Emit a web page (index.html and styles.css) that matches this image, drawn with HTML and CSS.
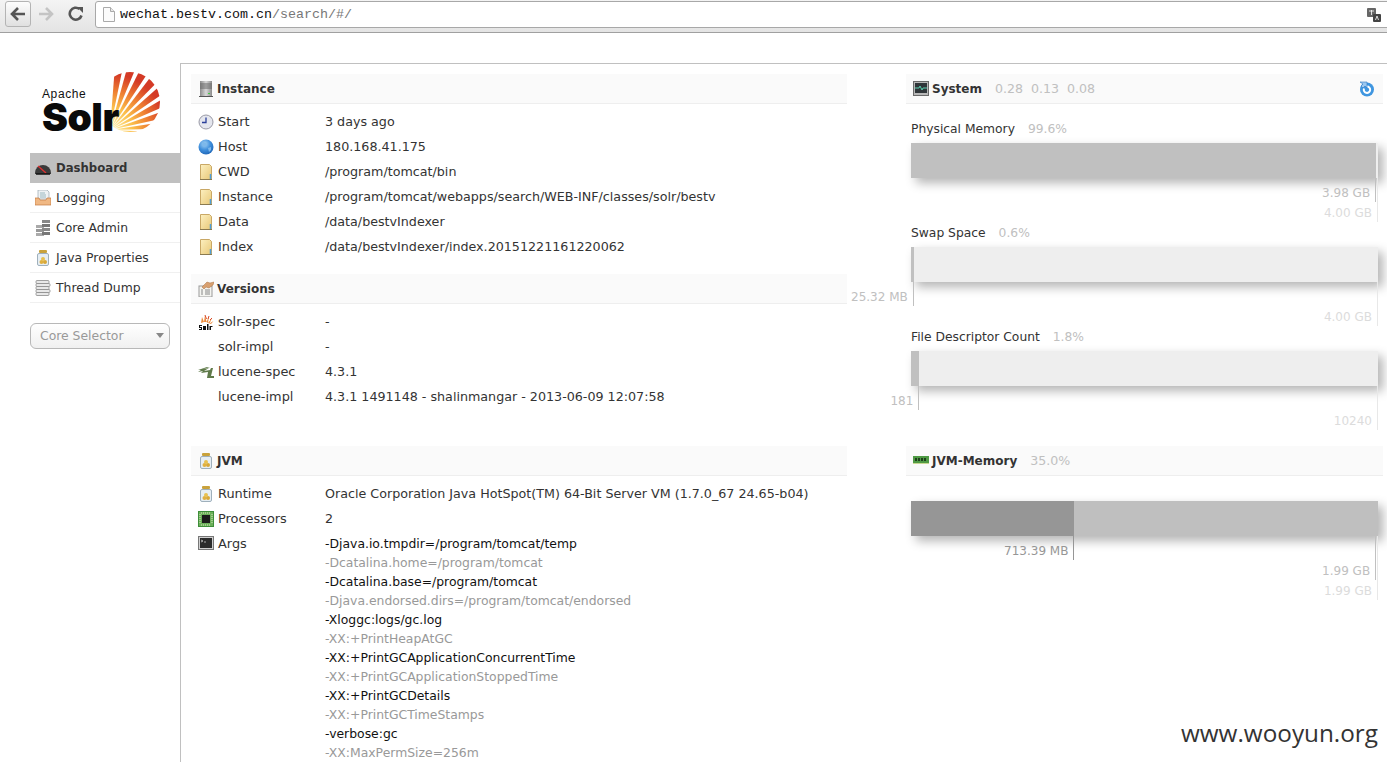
FILE: index.html
```html
<!DOCTYPE html>
<html lang="en">
<head>
<meta charset="utf-8">
<title>Solr Admin</title>
<link rel="stylesheet" href="styles.css">
</head>
<body>
<svg class="sprite" width="0" height="0" aria-hidden="true">
  <defs>
    <linearGradient id="g-folder" x1="0" y1="0" x2="1" y2="1"><stop offset="0" stop-color="#fdf0c0"/><stop offset="1" stop-color="#e8c878"/></linearGradient>
    <linearGradient id="g-grey" x1="0" y1="0" x2="1" y2="0"><stop offset="0" stop-color="#8c8c8c"/><stop offset=".5" stop-color="#d8d8d8"/><stop offset="1" stop-color="#8c8c8c"/></linearGradient>
    <radialGradient id="g-globe" cx=".4" cy=".3" r=".8"><stop offset="0" stop-color="#a6d4f5"/><stop offset=".5" stop-color="#3f8fdc"/><stop offset="1" stop-color="#1a5fb0"/></radialGradient>
    <radialGradient id="g-ray" gradientUnits="userSpaceOnUse" cx="0" cy="0" r="56"><stop offset=".1" stop-color="#ffeb9c"/><stop offset=".4" stop-color="#fbc04c"/><stop offset=".68" stop-color="#ef8232"/><stop offset="1" stop-color="#d43a26"/></radialGradient>
    <symbol id="i-server" viewBox="0 0 16 16"><rect x="2" y="0" width="12" height="15" fill="url(#g-grey)"/><path d="M2 3h12M2 5h12M2 7h12" stroke="#666" fill="none"/><path d="M1 15h14v1H1z" fill="#555"/><rect x="10" y="12" width="2" height="1" fill="#4c4"/></symbol>
    <symbol id="i-clock" viewBox="0 0 16 16"><circle cx="8" cy="8" r="7" fill="#e4e6ee" stroke="#9a9aa6"/><path d="M8 3.500V8.500H4" fill="none" stroke="#2a3f9a" stroke-width="1.300"/></symbol>
    <symbol id="i-globe" viewBox="0 0 16 16"><circle cx="8" cy="8" r="7.500" fill="url(#g-globe)"/><path d="M5 3l3 1 1 2-3 2-2-2zM10 9l3-1 0 3-2 2z" fill="#7db8ea"/></symbol>
    <symbol id="i-folder" viewBox="0 0 16 16"><path d="M2.500 .5h9l2 2v13h-11z" fill="url(#g-folder)" stroke="#c9a866"/><path d="M2 15.500h12" stroke="#8a7a50"/><path d="M12.500 10v5" stroke="#4f9fd8" stroke-width="1.500"/></symbol>
    <symbol id="i-versions" viewBox="0 0 16 16"><rect x="1" y="5" width="13" height="11" fill="#f4f4f0" stroke="#999"/><path d="M3 9h2M7 9h5M3 11h2M7 11h5M3 13h2M7 13h5" stroke="#888"/><path d="M4 6l5-5 3 1 4-1-1 3-4 3-3-1-2 2z" fill="#d8a070" stroke="#a87040" stroke-width=".5"/></symbol>
    <symbol id="i-solr" viewBox="0 0 16 16"><path d="M3 9L4 3 6 8zM6 8L7 1 8.500 8zM8.500 8L11 2 10 9zM10 9l4-5-2.500 5.500zM11.500 9.500l4-2.500-2.500 3z" fill="#ec8a3a"/><path d="M7 1l1.500 4M11 2l-1 3M14 4l-2 2" stroke="#d84a2a"/><path d="M1 11h3v1H2v1h2v3H1v-1h2v-1H1zM5 12h3v4H5zM9 10h1.500v6H9zM11.500 12h3v1h-1.500v3h-1.500z" fill="#111"/></symbol>
    <symbol id="i-lucene" viewBox="0 0 16 16"><path d="M0 6l9-3 3 0-7 2 6-1-5 3 6-1 1-2 2 0-2 8h4v2H9l1-6-7 1 2-2-5 1 3-2z" fill="#5f7a4a"/></symbol>
    <symbol id="i-jar" viewBox="0 0 16 16"><rect x="4" y="0" width="8" height="3" rx="1" fill="#c9a23c"/><rect x="2.500" y="3.500" width="11" height="12" rx="1.500" fill="#e6eef4" stroke="#9fb0bc"/><circle cx="6.500" cy="12" r="2" fill="#e0b040"/><circle cx="10" cy="12" r="2" fill="#d8a838"/><circle cx="8" cy="9" r="2" fill="#e8c050"/></symbol>
    <symbol id="i-chip" viewBox="0 0 16 16"><rect x="0" y="0" width="16" height="16" fill="#3e8e3a"/><rect x="1" y="1" width="14" height="14" fill="#6cb05a"/><rect x="4" y="4" width="8" height="8" fill="#1c1c1c"/><path d="M2 3v10M14 3v10M3 2h10M3 14h10" stroke="#d8e8c0" stroke-dasharray="1 1"/></symbol>
    <symbol id="i-term" viewBox="0 0 16 16"><rect x=".5" y="1.500" width="15" height="13" fill="#d0d0d0" stroke="#777"/><rect x="2" y="3" width="12" height="10" fill="#2c2c2c"/><path d="M3 5l2 1-2 1M6 7h2" stroke="#ccc" fill="none" stroke-width=".8"/></symbol>
    <symbol id="i-monitor" viewBox="0 0 16 16"><rect x=".5" y=".5" width="15" height="14" fill="#b8b8b8" stroke="#6a6a6a"/><rect x="2" y="2" width="12" height="10" fill="#30363a"/><path d="M2 7h4l1-2 2 4 1-2h4" stroke="#5ad0b0" fill="none"/></symbol>
    <symbol id="i-ram" viewBox="0 0 16 16"><rect x="0" y="3" width="16" height="8" fill="#4f9a44"/><path d="M2 5h2v3H2zM5 5h2v3H5zM8 5h2v3H8zM11 5h2v3h-2z" fill="#1f3f1c"/><path d="M0 10h16v1H0z" fill="#c8d890"/></symbol>
    <symbol id="i-reload" viewBox="0 0 16 16"><circle cx="8" cy="8.500" r="7" fill="#3f96e0"/><path d="M8 5.500a3.200 3.200 0 1 1-3 2" fill="none" stroke="#fff" stroke-width="2"/><path d="M1 1h7v6L6 5 4 7 2 5l2-2z" fill="#9cc8f0" stroke="#2f78c4" stroke-width=".6"/></symbol>
    <symbol id="i-dash" viewBox="0 0 16 16"><path d="M0 13a8 8 0 0 1 16 0v1H0z" fill="#3a3a3a"/><path d="M3 6l8 7" stroke="#e03030" stroke-width="1.300"/><path d="M1 14h14" stroke="#111" stroke-width="1.500"/></symbol>
    <symbol id="i-log" viewBox="0 0 16 16"><path d="M3 0h9l2 2v7H3z" fill="#eef2f4" stroke="#9aa8b0" stroke-width=".7"/><path d="M5 3h5M5 5h6M5 7h6" stroke="#9ab8c0"/><path d="M0 8h4l1 2h6l1-2h4v7H0z" fill="#f0b884" stroke="#c47a40" stroke-width=".7"/></symbol>
    <symbol id="i-core" viewBox="0 0 16 16"><rect x="1" y="5" width="8" height="3" fill="#aaa"/><rect x="1" y="9" width="8" height="3" fill="#999"/><rect x="1" y="13" width="8" height="3" fill="#aaa"/><rect x="7" y="0" width="8" height="3" fill="#888"/><rect x="7" y="4" width="8" height="3" fill="#777"/><rect x="7" y="8" width="8" height="3" fill="#888"/><rect x="7" y="12" width="8" height="3" fill="#777"/></symbol>
    <symbol id="i-thread" viewBox="0 0 16 16"><g fill="#e8e8e8" stroke="#8a8a8a" stroke-width=".8"><rect x="1" y=".5" width="13" height="3" rx="1"/><rect x="1" y="3.500" width="14" height="3" rx="1"/><rect x="1" y="6.500" width="13" height="3" rx="1"/><rect x="1" y="9.500" width="14" height="3" rx="1"/><rect x="1" y="12.500" width="13" height="3" rx="1"/></g></symbol>
    <polygon id="ray" points="0,0 80,-5 80,5" fill="url(#g-ray)"/>
    <clipPath id="sun-clip"><circle cx="35" cy="34" r="30"/></clipPath>
  </defs>
</svg>

<header class="chrome">
  <button class="nav-btn nav-back" aria-label="Back">
    <svg class="nav-icon" viewBox="0 0 16 16"><path d="M8 2L2 8l6 6M2 8h13" fill="none" stroke="#555" stroke-width="2.600"/></svg>
  </button>
  <span class="nav-plain">
    <svg class="nav-icon" viewBox="0 0 16 16"><path d="M8 2l6 6-6 6M14 8H1" fill="none" stroke="#c4c4c4" stroke-width="2.600"/></svg>
  </span>
  <span class="nav-plain">
    <svg class="nav-icon" viewBox="0 0 16 16"><path d="M13.500 9.500A6 6 0 1 1 11.500 3" fill="none" stroke="#555" stroke-width="2.600"/><path d="M9 1h6v6z" fill="#555"/></svg>
  </span>
  <div class="address">
    <svg class="page-icon" viewBox="0 0 12 15"><path d="M.5.500h7l4 4v10H.500z" fill="#fbfbfb" stroke="#aaa"/><path d="M7.500.500v4h4" fill="#e8e8e8" stroke="#aaa"/></svg>
    <span class="url">wechat.bestv.com.cn<span class="url-path">/search/#/</span></span>
    <svg class="translate" viewBox="0 0 14 14"><rect x="0" y="0" width="9" height="9" rx="1" fill="#666"/><rect x="6" y="6" width="8" height="8" rx="1" fill="#444"/><path d="M2 3h5M4.500 2v5M8.500 12l1.500-4 1.500 4" stroke="#fff" fill="none" stroke-width=".8"/></svg>
  </div>
</header>

<div class="page">
  <aside class="sidebar">
    <div class="logo">
      <svg class="logo-sun" viewBox="0 0 70 67">
        <g clip-path="url(#sun-clip)"><g transform="translate(15 62)">
          <use href="#ray" transform="rotate(6)"/><use href="#ray" transform="rotate(-5)"/><use href="#ray" transform="rotate(-16)"/><use href="#ray" transform="rotate(-27)"/><use href="#ray" transform="rotate(-38)"/><use href="#ray" transform="rotate(-49)"/><use href="#ray" transform="rotate(-60)"/><use href="#ray" transform="rotate(-71)"/><use href="#ray" transform="rotate(-82)"/>
        </g></g>
      </svg>
      <div class="logo-words">
        <span class="logo-apache">Apache</span>
        <span class="logo-solr">Solr</span>
      </div>
    </div>
    <nav class="menu">
      <a class="menu-item active"><svg class="ico"><use href="#i-dash"/></svg>Dashboard</a>
      <a class="menu-item"><svg class="ico"><use href="#i-log"/></svg>Logging</a>
      <a class="menu-item"><svg class="ico"><use href="#i-core"/></svg>Core Admin</a>
      <a class="menu-item"><svg class="ico"><use href="#i-jar"/></svg>Java Properties</a>
      <a class="menu-item"><svg class="ico"><use href="#i-thread"/></svg>Thread Dump</a>
    </nav>
    <div class="core-selector"><span>Core Selector</span><i class="caret"></i></div>
  </aside>

  <main class="main">
    <div class="col-stack">
      <section class="block">
        <h2 class="block-head"><svg class="ico"><use href="#i-server"/></svg>Instance</h2>
        <div class="rows">
          <div class="row"><svg class="ico"><use href="#i-clock"/></svg><span class="key">Start</span><span class="val">3 days ago</span></div>
          <div class="row"><svg class="ico"><use href="#i-globe"/></svg><span class="key">Host</span><span class="val">180.168.41.175</span></div>
          <div class="row"><svg class="ico"><use href="#i-folder"/></svg><span class="key">CWD</span><span class="val">/program/tomcat/bin</span></div>
          <div class="row"><svg class="ico"><use href="#i-folder"/></svg><span class="key">Instance</span><span class="val">/program/tomcat/webapps/search/WEB-INF/classes/solr/bestv</span></div>
          <div class="row"><svg class="ico"><use href="#i-folder"/></svg><span class="key">Data</span><span class="val">/data/bestvIndexer</span></div>
          <div class="row"><svg class="ico"><use href="#i-folder"/></svg><span class="key">Index</span><span class="val">/data/bestvIndexer/index.20151221161220062</span></div>
        </div>
      </section>
      <section class="block block-next">
        <h2 class="block-head"><svg class="ico"><use href="#i-versions"/></svg>Versions</h2>
        <div class="rows">
          <div class="row"><svg class="ico"><use href="#i-solr"/></svg><span class="key">solr-spec</span><span class="val">-</span></div>
          <div class="row"><span class="ico"></span><span class="key">solr-impl</span><span class="val">-</span></div>
          <div class="row"><svg class="ico"><use href="#i-lucene"/></svg><span class="key">lucene-spec</span><span class="val">4.3.1</span></div>
          <div class="row"><span class="ico"></span><span class="key">lucene-impl</span><span class="val">4.3.1 1491148 - shalinmangar - 2013-06-09 12:07:58</span></div>
        </div>
      </section>
    </div>

    <section class="block">
      <h2 class="block-head"><svg class="ico"><use href="#i-monitor"/></svg>System<span class="load load-first">0.28</span><span class="load">0.13</span><span class="load">0.08</span><svg class="ico reload"><use href="#i-reload"/></svg></h2>
      <div class="meter">
        <div class="meter-label">Physical Memory<span class="pct">99.6%</span></div>
        <div class="bar">
          <div class="fill" style="width:99.6%"></div>
          <div class="mark used" style="width:99.6%"><span>3.98 GB</span></div>
          <div class="mark total" style="width:100%"><span>4.00 GB</span></div>
        </div>
      </div>
      <div class="meter">
        <div class="meter-label">Swap Space<span class="pct">0.6%</span></div>
        <div class="bar">
          <div class="fill" style="width:0.6%"></div>
          <div class="mark used" style="width:0.6%"><span>25.32 MB</span></div>
          <div class="mark total" style="width:100%"><span>4.00 GB</span></div>
        </div>
      </div>
      <div class="meter">
        <div class="meter-label">File Descriptor Count<span class="pct">1.8%</span></div>
        <div class="bar">
          <div class="fill" style="width:1.8%"></div>
          <div class="mark used" style="width:1.8%"><span>181</span></div>
          <div class="mark total" style="width:100%"><span>10240</span></div>
        </div>
      </div>
    </section>

    <section class="block">
      <h2 class="block-head"><svg class="ico"><use href="#i-jar"/></svg>JVM</h2>
      <div class="rows">
        <div class="row"><svg class="ico"><use href="#i-jar"/></svg><span class="key">Runtime</span><span class="val">Oracle Corporation Java HotSpot(TM) 64-Bit Server VM (1.7.0_67 24.65-b04)</span></div>
        <div class="row"><svg class="ico"><use href="#i-chip"/></svg><span class="key">Processors</span><span class="val">2</span></div>
        <div class="row row-args"><svg class="ico"><use href="#i-term"/></svg><span class="key">Args</span>
          <div class="args">
            <div>-Djava.io.tmpdir=/program/tomcat/temp</div>
            <div>-Dcatalina.home=/program/tomcat</div>
            <div>-Dcatalina.base=/program/tomcat</div>
            <div>-Djava.endorsed.dirs=/program/tomcat/endorsed</div>
            <div>-Xloggc:logs/gc.log</div>
            <div>-XX:+PrintHeapAtGC</div>
            <div>-XX:+PrintGCApplicationConcurrentTime</div>
            <div>-XX:+PrintGCApplicationStoppedTime</div>
            <div>-XX:+PrintGCDetails</div>
            <div>-XX:+PrintGCTimeStamps</div>
            <div>-verbose:gc</div>
            <div>-XX:MaxPermSize=256m</div>
          </div>
        </div>
      </div>
    </section>

    <section class="block">
      <h2 class="block-head"><svg class="ico"><use href="#i-ram"/></svg>JVM-Memory<span class="load load-first">35.0%</span></h2>
      <div class="meter meter-jvm">
        <div class="bar bar-jvm">
          <div class="fill fill-used" style="width:35%"></div>
          <div class="mark used used-dark" style="width:35%"><span>713.39 MB</span></div>
          <div class="mark total committed" style="width:99.6%"><span>1.99 GB</span></div>
          <div class="mark total max" style="width:100%"><span>1.99 GB</span></div>
        </div>
      </div>
    </section>
  </main>
</div>
<div class="watermark">www.wooyun.org</div>
</body>
</html>
```
FILE: styles.css
```css
* { box-sizing: border-box; }
html, body { margin: 0; height: 100%; overflow: hidden; background: #fff; }
body { position: relative; font-family: "DejaVu Sans", sans-serif; font-size: 12px; color: #333; }
.sprite { position: absolute; }

/* browser chrome */
.chrome { display: flex; align-items: flex-start; height: 33px; padding: 1px 0 0 5px; background: linear-gradient(#f4f4f4, #e4e4e4); border-bottom: 1px solid #a0a0a0; }
.nav-btn { display: flex; align-items: center; justify-content: center; width: 26px; height: 26px; padding: 0; background: linear-gradient(#fdfdfd, #e0e0e0); border: 1px solid #b4b4b4; border-radius: 3px; }
.nav-plain { display: flex; align-items: center; justify-content: center; width: 30px; height: 26px; }
.nav-icon { width: 16px; height: 16px; }
.address { display: flex; align-items: center; flex: 1; height: 27px; margin-left: 4px; margin-right: -8px; padding-left: 7px; background: #fff; border: 1px solid #a8a8a8; border-radius: 3px; }
.page-icon { width: 12px; height: 15px; flex: none; margin-right: 5px; }
.url { font-family: "Liberation Mono", monospace; font-size: 13.33px; color: #111; }
.url-path { color: #777; }
.translate { width: 14px; height: 14px; margin-left: auto; margin-right: 13px; }

/* page */
.page { display: flex; height: 729px; padding-top: 30px; }
.sidebar { flex: none; width: 180px; padding-left: 30px; }
.logo { position: relative; height: 90px; }
.logo-words { position: relative; display: flex; flex-direction: column; height: 90px; padding-left: 12px; color: #111; }
.logo-apache { margin-top: 25px; font-family: "Liberation Sans", sans-serif; font-size: 12px; letter-spacing: .6px; line-height: 12px; }
.logo-solr { font-family: "Inter", sans-serif; font-size: 39px; font-weight: 900; line-height: 34px; letter-spacing: -.5px; color: #0a0a0a; }
.logo-sun { position: absolute; left: 65px; top: 5px; width: 70px; height: 67px; }
.ico { display: block; flex: none; width: 16px; height: 16px; }

.menu-item { display: flex; align-items: center; gap: 5px; height: 30px; padding-left: 5px; font-size: 12.4px; border-bottom: 1px solid #f0f0f0; color: #333; }
.menu-item.active { font-size: 11.7px; font-weight: 700; background: #c0c0c0; border-bottom-color: #c0c0c0; }
.core-selector { display: flex; align-items: center; justify-content: space-between; width: 140px; height: 26px; margin-top: 20px; padding: 0 5px 2px 9px; font-size: 12.4px; border: 1px solid #b8b8b8; border-radius: 6px; background: linear-gradient(#fff, #f0f0f0); color: #999; }
.caret { width: 0; height: 0; border: 4.500px solid transparent; border-top: 5px solid #888; border-bottom: 0; }

.main { display: grid; flex: 1; grid-template-columns: 656px 477px; grid-template-rows: 342px auto; column-gap: 59px; row-gap: 30px; align-content: start; min-width: 0; padding: 10px 0 0 10px; border-top: 1px solid #c0c0c0; border-left: 1px solid #c0c0c0; }
.block-next { margin-top: 15px; }
.block-head { display: flex; align-items: center; gap: 3px; height: 30px; margin: 0; padding-left: 7px; font-size: 12px; font-weight: 700; color: #333; background: #fafafa; border-bottom: 1px solid #eee; }
.load { margin-left: 5px; font-size: 12.6px; font-weight: 400; color: #c0c0c0; }
.load-first { margin-left: 10px; }
.reload { margin-left: auto; margin-right: 8px; }
.rows { padding-top: 5px; }
.row { display: flex; align-items: center; height: 25px; padding-left: 7px; }
.key { flex: none; width: 107px; margin-left: 4px; font-size: 12.9px; }
.val { font-size: 12.7px; white-space: nowrap; }
.row-args { align-items: flex-start; height: auto; }
.row-args .ico { margin-top: 4px; }
.row-args .key { line-height: 25px; }
.args { padding-top: 3px; font-size: 12.4px; line-height: 19px; }
.args div:nth-child(odd) { color: #111; }
.args div:nth-child(even) { color: #999; }

.meter { padding: 0 5px 30px; }
.meter-label { display: flex; align-items: center; height: 39px; padding-top: 10px; font-size: 12.3px; }
.pct { margin-left: 13px; color: #c0c0c0; }
.bar { position: relative; height: 35px; background: #eee; box-shadow: 5px 5px 10px #b4b4b4; }
.fill { position: absolute; top: 0; bottom: 0; left: 0; background: #c0c0c0; }
.mark { position: absolute; top: 100%; left: 0; display: flex; justify-content: flex-end; white-space: nowrap; line-height: 18px; border-right: 1px solid; }
.mark span { flex: none; margin-right: 5px; }
.mark.used { height: 24px; padding-top: 6px; color: #c0c0c0; border-color: #c0c0c0; }
.mark.total { height: 44px; padding-top: 26px; color: #dcdcdc; border-color: #e8e8e8; }
.mark.used-dark { color: #969696; border-color: #969696; }
.mark.committed { color: #c0c0c0; border-color: #c0c0c0; }
.mark.max { height: 64px; padding-top: 46px; }
.meter-jvm { padding-top: 25px; }
.bar-jvm { background: #bfbfbf; }
.fill-used { background: #969696; }

.watermark { position: absolute; right: 9px; bottom: 14px; font-family: "Open Sans", sans-serif; font-size: 24.3px; line-height: 30px; color: #333; }
```
